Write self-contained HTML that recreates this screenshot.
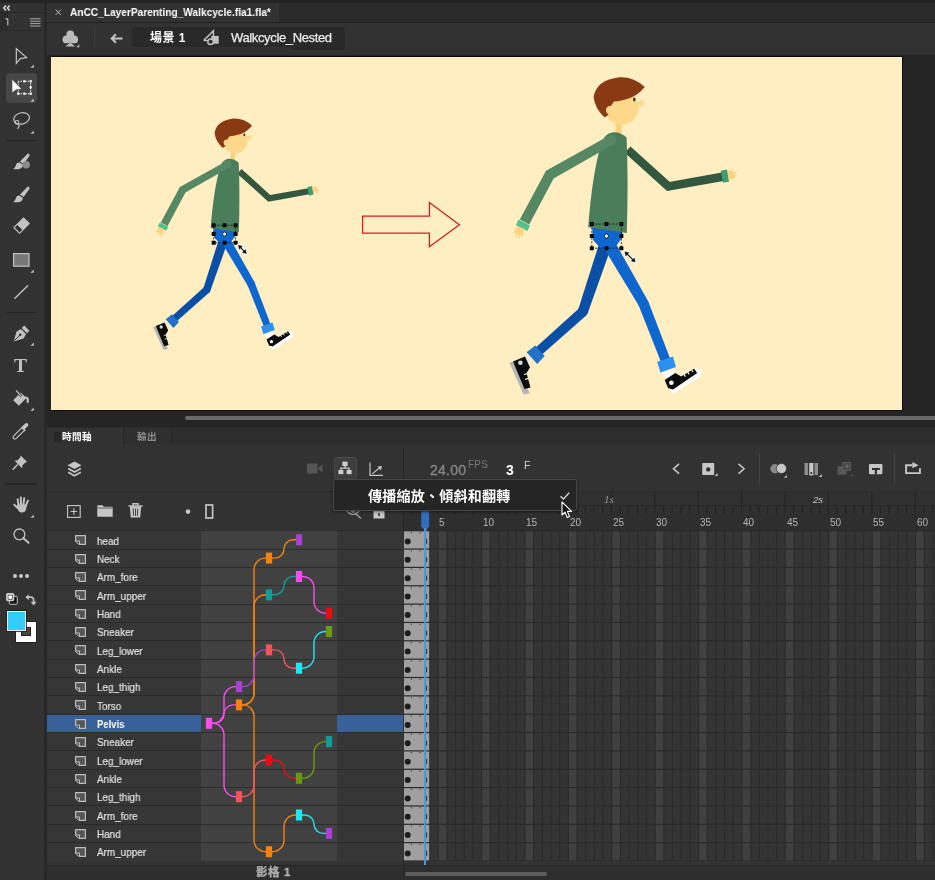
<!DOCTYPE html><html><head><meta charset="utf-8"><title>Animate</title><style>
*{box-sizing:border-box;margin:0;padding:0}
html,body{width:935px;height:880px;overflow:hidden;background:#282828}
body{position:relative;font-family:"Liberation Sans","Noto Sans CJK TC",sans-serif;color:#d4d4d4;font-size:11px}
.a{position:absolute}
.t{position:absolute;white-space:nowrap;line-height:1;will-change:transform}
svg{position:absolute;overflow:visible}
</style></head><body>
<div class="a" style="left:0px;top:0px;width:935px;height:3px;background:#232323;"></div>
<div class="a" style="left:0px;top:3px;width:44.2px;height:877px;background:#323232;"></div>
<div class="a" style="left:0px;top:12px;width:44.2px;height:1px;background:#262626;"></div>
<div class="a" style="left:0px;top:13px;width:8px;height:17px;background:#2b2b2b;"></div>
<div class="a" style="left:0px;top:30px;width:44.2px;height:1px;background:#2a2a2a;"></div>
<div class="a" style="left:47px;top:3px;width:888px;height:18.5px;background:#2a2a2a;"></div>
<div class="a" style="left:47px;top:3px;width:232px;height:18.5px;background:#323232;"></div>
<div class="a" style="left:47px;top:21.5px;width:888px;height:1px;background:#1f1f1f;"></div>
<div class="a" style="left:47px;top:22.5px;width:888px;height:32px;background:#323232;"></div>
<div class="a" style="left:47px;top:54.5px;width:888px;height:373.5px;background:#252525;"></div>
<div class="a" style="left:50.6px;top:56px;width:852.2px;height:354.8px;background:#0c0c0c;"></div>
<div class="a" style="left:51px;top:57px;width:851px;height:353px;background:#feeec2;"></div>
<div class="a" style="left:47px;top:427.4px;width:888px;height:453px;background:#2b2b2b;"></div>
<svg style="left:54.6px;top:9px" width="6.6" height="6.6" viewBox="0 0 8 8"><path d="M0.8 0.8L7.2 7.2M7.2 0.8L0.8 7.2" stroke="#c8c8c8" stroke-width="1.1" fill="none"/></svg>
<div class="t" style="left:70.3px;top:6.6px;font-size:11px;color:#ffffff;font-weight:bold;transform:scaleX(.922);transform-origin:0 0">AnCC_LayerParenting_Walkcycle.fla1.fla*</div>
<div class="a" style="left:132px;top:27px;width:213px;height:20px;background:#292929;border-radius:3px"></div>
<div class="a" style="left:291px;top:44px;width:54px;height:6px;background:#292929;border-radius:0 0 3px 3px"></div>
<div class="a" style="left:93.8px;top:27.5px;width:1px;height:19px;background:#3c3c3c;"></div>
<div class="t" style="left:150px;top:31.5px;font-size:12px;color:#ffffff;font-weight:bold;letter-spacing:0.5px">場景 1</div>
<div class="t" style="left:230.5px;top:31px;font-size:13px;color:#ececec;font-weight:normal;letter-spacing:-0.36px;-webkit-text-stroke:0.25px #ececec">Walkcycle_Nested</div>
<svg style="left:110px;top:33px" width="13" height="11" viewBox="0 0 13 11"><path d="M12.5 5.5H2.5M6 1.2L1.6 5.5L6 9.8" stroke="#c4c4c4" stroke-width="1.9" fill="none" stroke-linejoin="miter"/></svg>
<svg style="left:61px;top:29.2px" width="20" height="20" viewBox="0 0 20 20"><g fill="#bdbdbd"><circle cx="9.3" cy="5.4" r="3.9"/><circle cx="5.4" cy="10.4" r="3.9"/><circle cx="13.2" cy="10.4" r="3.9"/><path d="M9.3 8L10.4 14.4L14.2 17.4H4.4L8.2 14.4Z"/><path d="M18.3 15.2V18.2H15.3Z"/></g></svg>
<svg style="left:203px;top:30px" width="17" height="17" viewBox="0 0 17 17"><path d="M0.6 10.6L10.4 0.8V7" stroke="#c0c0c0" stroke-width="1.5" fill="none" stroke-linejoin="miter"/><path d="M1 10.6H6" stroke="#c0c0c0" stroke-width="1.2"/><rect x="8.2" y="5.9" width="7.5" height="7.8" fill="#c0c0c0"/><circle cx="7.6" cy="11.7" r="2.8" fill="#2e2e2e" stroke="#c0c0c0" stroke-width="1.5"/></svg>
<div class="a" style="left:185.2px;top:415.5px;width:760px;height:4.2px;background:#696969;border-radius:2.1px"></div>
<div class="a" style="left:47px;top:428px;width:888px;height:16px;background:#2d2d2d;"></div>
<div class="a" style="left:47px;top:428px;width:76px;height:16.2px;background:#323232;"></div>
<div class="a" style="left:123px;top:428px;width:48.5px;height:15.8px;background:#2f2f2f;border-left:1px solid #262626;border-right:1px solid #262626"></div>
<div class="a" style="left:54px;top:431.5px;width:7px;height:10px;background:#272727;"></div>
<div class="t" style="left:62px;top:431.8px;font-size:9.6px;color:#ffffff;font-weight:bold;letter-spacing:0.4px">時間軸</div>
<div class="t" style="left:136.5px;top:431.8px;font-size:9.6px;color:#8c8c8c;font-weight:bold;letter-spacing:0.4px">輸出</div>
<div class="a" style="left:47px;top:444px;width:888px;height:436px;background:#323232;"></div>
<div class="a" style="left:47px;top:491px;width:888px;height:1px;background:#282828;"></div>
<div class="a" style="left:403px;top:447px;width:1px;height:84px;background:#262626;"></div>
<div class="a" style="left:47px;top:530.7px;width:356px;height:330.3px;background:#363636;"></div>
<div class="a" style="left:201px;top:530.7px;width:135.8px;height:330.3px;background:#414141;"></div>
<div class="a" style="left:47px;top:714.2px;width:154px;height:18.35px;background:#38619a;"></div>
<div class="a" style="left:336.8px;top:714.2px;width:66.2px;height:18.35px;background:#38619a;"></div>
<div class="a" style="left:47px;top:530.2px;width:356px;height:1px;background:#2a2a2a;"></div>
<div class="a" style="left:47px;top:548.55px;width:356px;height:1px;background:#2a2a2a;"></div>
<div class="a" style="left:47px;top:566.9px;width:356px;height:1px;background:#2a2a2a;"></div>
<div class="a" style="left:47px;top:585.25px;width:356px;height:1px;background:#2a2a2a;"></div>
<div class="a" style="left:47px;top:603.6px;width:356px;height:1px;background:#2a2a2a;"></div>
<div class="a" style="left:47px;top:621.95px;width:356px;height:1px;background:#2a2a2a;"></div>
<div class="a" style="left:47px;top:640.3px;width:356px;height:1px;background:#2a2a2a;"></div>
<div class="a" style="left:47px;top:658.65px;width:356px;height:1px;background:#2a2a2a;"></div>
<div class="a" style="left:47px;top:677.0px;width:356px;height:1px;background:#2a2a2a;"></div>
<div class="a" style="left:47px;top:695.35px;width:356px;height:1px;background:#2a2a2a;"></div>
<div class="a" style="left:47px;top:713.7px;width:356px;height:1px;background:#2a2a2a;"></div>
<div class="a" style="left:47px;top:732.05px;width:356px;height:1px;background:#2a2a2a;"></div>
<div class="a" style="left:47px;top:750.4px;width:356px;height:1px;background:#2a2a2a;"></div>
<div class="a" style="left:47px;top:768.75px;width:356px;height:1px;background:#2a2a2a;"></div>
<div class="a" style="left:47px;top:787.1px;width:356px;height:1px;background:#2a2a2a;"></div>
<div class="a" style="left:47px;top:805.45px;width:356px;height:1px;background:#2a2a2a;"></div>
<div class="a" style="left:47px;top:823.8px;width:356px;height:1px;background:#2a2a2a;"></div>
<div class="a" style="left:47px;top:842.15px;width:356px;height:1px;background:#2a2a2a;"></div>
<div class="a" style="left:47px;top:860.5px;width:356px;height:1px;background:#2a2a2a;"></div>
<div class="a" style="left:201px;top:530.2px;width:135.8px;height:1px;background:#2d2d2d;"></div>
<div class="a" style="left:201px;top:548.55px;width:135.8px;height:1px;background:#2d2d2d;"></div>
<div class="a" style="left:201px;top:566.9px;width:135.8px;height:1px;background:#2d2d2d;"></div>
<div class="a" style="left:201px;top:585.25px;width:135.8px;height:1px;background:#2d2d2d;"></div>
<div class="a" style="left:201px;top:603.6px;width:135.8px;height:1px;background:#2d2d2d;"></div>
<div class="a" style="left:201px;top:621.95px;width:135.8px;height:1px;background:#2d2d2d;"></div>
<div class="a" style="left:201px;top:640.3px;width:135.8px;height:1px;background:#2d2d2d;"></div>
<div class="a" style="left:201px;top:658.65px;width:135.8px;height:1px;background:#2d2d2d;"></div>
<div class="a" style="left:201px;top:677.0px;width:135.8px;height:1px;background:#2d2d2d;"></div>
<div class="a" style="left:201px;top:695.35px;width:135.8px;height:1px;background:#2d2d2d;"></div>
<div class="a" style="left:201px;top:713.7px;width:135.8px;height:1px;background:#2d2d2d;"></div>
<div class="a" style="left:201px;top:732.05px;width:135.8px;height:1px;background:#2d2d2d;"></div>
<div class="a" style="left:201px;top:750.4px;width:135.8px;height:1px;background:#2d2d2d;"></div>
<div class="a" style="left:201px;top:768.75px;width:135.8px;height:1px;background:#2d2d2d;"></div>
<div class="a" style="left:201px;top:787.1px;width:135.8px;height:1px;background:#2d2d2d;"></div>
<div class="a" style="left:201px;top:805.45px;width:135.8px;height:1px;background:#2d2d2d;"></div>
<div class="a" style="left:201px;top:823.8px;width:135.8px;height:1px;background:#2d2d2d;"></div>
<div class="a" style="left:201px;top:842.15px;width:135.8px;height:1px;background:#2d2d2d;"></div>
<div class="a" style="left:201px;top:860.5px;width:135.8px;height:1px;background:#2d2d2d;"></div>
<svg style="left:75px;top:535.30px" width="11" height="10" viewBox="0 0 11 10"><path d="M0.6 0.6H10.4V9.4H4.2L0.6 6.2Z" fill="#555" stroke="#bdbdbd" stroke-width="1.2" stroke-linejoin="round"/><path d="M0.8 6H4.4V9.2" fill="#383838" stroke="#bdbdbd" stroke-width="1.1"/></svg>
<div class="t" style="left:97.4px;top:535.5px;font-size:11px;color:#e4e4e4;font-weight:normal;transform:scaleX(.9);transform-origin:0 0;-webkit-text-stroke:0.2px #e4e4e4">head</div>
<svg style="left:75px;top:553.65px" width="11" height="10" viewBox="0 0 11 10"><path d="M0.6 0.6H10.4V9.4H4.2L0.6 6.2Z" fill="#555" stroke="#bdbdbd" stroke-width="1.2" stroke-linejoin="round"/><path d="M0.8 6H4.4V9.2" fill="#383838" stroke="#bdbdbd" stroke-width="1.1"/></svg>
<div class="t" style="left:97.4px;top:553.85px;font-size:11px;color:#e4e4e4;font-weight:normal;transform:scaleX(.9);transform-origin:0 0;-webkit-text-stroke:0.2px #e4e4e4">Neck</div>
<svg style="left:75px;top:572.00px" width="11" height="10" viewBox="0 0 11 10"><path d="M0.6 0.6H10.4V9.4H4.2L0.6 6.2Z" fill="#555" stroke="#bdbdbd" stroke-width="1.2" stroke-linejoin="round"/><path d="M0.8 6H4.4V9.2" fill="#383838" stroke="#bdbdbd" stroke-width="1.1"/></svg>
<div class="t" style="left:97.4px;top:572.2px;font-size:11px;color:#e4e4e4;font-weight:normal;transform:scaleX(.9);transform-origin:0 0;-webkit-text-stroke:0.2px #e4e4e4">Arm_fore</div>
<svg style="left:75px;top:590.35px" width="11" height="10" viewBox="0 0 11 10"><path d="M0.6 0.6H10.4V9.4H4.2L0.6 6.2Z" fill="#555" stroke="#bdbdbd" stroke-width="1.2" stroke-linejoin="round"/><path d="M0.8 6H4.4V9.2" fill="#383838" stroke="#bdbdbd" stroke-width="1.1"/></svg>
<div class="t" style="left:97.4px;top:590.55px;font-size:11px;color:#e4e4e4;font-weight:normal;transform:scaleX(.9);transform-origin:0 0;-webkit-text-stroke:0.2px #e4e4e4">Arm_upper</div>
<svg style="left:75px;top:608.70px" width="11" height="10" viewBox="0 0 11 10"><path d="M0.6 0.6H10.4V9.4H4.2L0.6 6.2Z" fill="#555" stroke="#bdbdbd" stroke-width="1.2" stroke-linejoin="round"/><path d="M0.8 6H4.4V9.2" fill="#383838" stroke="#bdbdbd" stroke-width="1.1"/></svg>
<div class="t" style="left:97.4px;top:608.9px;font-size:11px;color:#e4e4e4;font-weight:normal;transform:scaleX(.9);transform-origin:0 0;-webkit-text-stroke:0.2px #e4e4e4">Hand</div>
<svg style="left:75px;top:627.05px" width="11" height="10" viewBox="0 0 11 10"><path d="M0.6 0.6H10.4V9.4H4.2L0.6 6.2Z" fill="#555" stroke="#bdbdbd" stroke-width="1.2" stroke-linejoin="round"/><path d="M0.8 6H4.4V9.2" fill="#383838" stroke="#bdbdbd" stroke-width="1.1"/></svg>
<div class="t" style="left:97.4px;top:627.25px;font-size:11px;color:#e4e4e4;font-weight:normal;transform:scaleX(.9);transform-origin:0 0;-webkit-text-stroke:0.2px #e4e4e4">Sneaker</div>
<svg style="left:75px;top:645.40px" width="11" height="10" viewBox="0 0 11 10"><path d="M0.6 0.6H10.4V9.4H4.2L0.6 6.2Z" fill="#555" stroke="#bdbdbd" stroke-width="1.2" stroke-linejoin="round"/><path d="M0.8 6H4.4V9.2" fill="#383838" stroke="#bdbdbd" stroke-width="1.1"/></svg>
<div class="t" style="left:97.4px;top:645.6px;font-size:11px;color:#e4e4e4;font-weight:normal;transform:scaleX(.9);transform-origin:0 0;-webkit-text-stroke:0.2px #e4e4e4">Leg_lower</div>
<svg style="left:75px;top:663.75px" width="11" height="10" viewBox="0 0 11 10"><path d="M0.6 0.6H10.4V9.4H4.2L0.6 6.2Z" fill="#555" stroke="#bdbdbd" stroke-width="1.2" stroke-linejoin="round"/><path d="M0.8 6H4.4V9.2" fill="#383838" stroke="#bdbdbd" stroke-width="1.1"/></svg>
<div class="t" style="left:97.4px;top:663.95px;font-size:11px;color:#e4e4e4;font-weight:normal;transform:scaleX(.9);transform-origin:0 0;-webkit-text-stroke:0.2px #e4e4e4">Ankle</div>
<svg style="left:75px;top:682.10px" width="11" height="10" viewBox="0 0 11 10"><path d="M0.6 0.6H10.4V9.4H4.2L0.6 6.2Z" fill="#555" stroke="#bdbdbd" stroke-width="1.2" stroke-linejoin="round"/><path d="M0.8 6H4.4V9.2" fill="#383838" stroke="#bdbdbd" stroke-width="1.1"/></svg>
<div class="t" style="left:97.4px;top:682.3px;font-size:11px;color:#e4e4e4;font-weight:normal;transform:scaleX(.9);transform-origin:0 0;-webkit-text-stroke:0.2px #e4e4e4">Leg_thigh</div>
<svg style="left:75px;top:700.45px" width="11" height="10" viewBox="0 0 11 10"><path d="M0.6 0.6H10.4V9.4H4.2L0.6 6.2Z" fill="#555" stroke="#bdbdbd" stroke-width="1.2" stroke-linejoin="round"/><path d="M0.8 6H4.4V9.2" fill="#383838" stroke="#bdbdbd" stroke-width="1.1"/></svg>
<div class="t" style="left:97.4px;top:700.65px;font-size:11px;color:#e4e4e4;font-weight:normal;transform:scaleX(.9);transform-origin:0 0;-webkit-text-stroke:0.2px #e4e4e4">Torso</div>
<svg style="left:75px;top:718.80px" width="11" height="10" viewBox="0 0 11 10"><path d="M0.6 0.6H10.4V9.4H4.2L0.6 6.2Z" fill="#555" stroke="#bdbdbd" stroke-width="1.2" stroke-linejoin="round"/><path d="M0.8 6H4.4V9.2" fill="#383838" stroke="#bdbdbd" stroke-width="1.1"/></svg>
<div class="t" style="left:97px;top:719.0px;font-size:11px;color:#ffffff;font-weight:bold;transform:scaleX(.86);transform-origin:0 0">Pelvis</div>
<svg style="left:75px;top:737.15px" width="11" height="10" viewBox="0 0 11 10"><path d="M0.6 0.6H10.4V9.4H4.2L0.6 6.2Z" fill="#555" stroke="#bdbdbd" stroke-width="1.2" stroke-linejoin="round"/><path d="M0.8 6H4.4V9.2" fill="#383838" stroke="#bdbdbd" stroke-width="1.1"/></svg>
<div class="t" style="left:97.4px;top:737.35px;font-size:11px;color:#e4e4e4;font-weight:normal;transform:scaleX(.9);transform-origin:0 0;-webkit-text-stroke:0.2px #e4e4e4">Sneaker</div>
<svg style="left:75px;top:755.50px" width="11" height="10" viewBox="0 0 11 10"><path d="M0.6 0.6H10.4V9.4H4.2L0.6 6.2Z" fill="#555" stroke="#bdbdbd" stroke-width="1.2" stroke-linejoin="round"/><path d="M0.8 6H4.4V9.2" fill="#383838" stroke="#bdbdbd" stroke-width="1.1"/></svg>
<div class="t" style="left:97.4px;top:755.7px;font-size:11px;color:#e4e4e4;font-weight:normal;transform:scaleX(.9);transform-origin:0 0;-webkit-text-stroke:0.2px #e4e4e4">Leg_lower</div>
<svg style="left:75px;top:773.85px" width="11" height="10" viewBox="0 0 11 10"><path d="M0.6 0.6H10.4V9.4H4.2L0.6 6.2Z" fill="#555" stroke="#bdbdbd" stroke-width="1.2" stroke-linejoin="round"/><path d="M0.8 6H4.4V9.2" fill="#383838" stroke="#bdbdbd" stroke-width="1.1"/></svg>
<div class="t" style="left:97.4px;top:774.05px;font-size:11px;color:#e4e4e4;font-weight:normal;transform:scaleX(.9);transform-origin:0 0;-webkit-text-stroke:0.2px #e4e4e4">Ankle</div>
<svg style="left:75px;top:792.20px" width="11" height="10" viewBox="0 0 11 10"><path d="M0.6 0.6H10.4V9.4H4.2L0.6 6.2Z" fill="#555" stroke="#bdbdbd" stroke-width="1.2" stroke-linejoin="round"/><path d="M0.8 6H4.4V9.2" fill="#383838" stroke="#bdbdbd" stroke-width="1.1"/></svg>
<div class="t" style="left:97.4px;top:792.4px;font-size:11px;color:#e4e4e4;font-weight:normal;transform:scaleX(.9);transform-origin:0 0;-webkit-text-stroke:0.2px #e4e4e4">Leg_thigh</div>
<svg style="left:75px;top:810.55px" width="11" height="10" viewBox="0 0 11 10"><path d="M0.6 0.6H10.4V9.4H4.2L0.6 6.2Z" fill="#555" stroke="#bdbdbd" stroke-width="1.2" stroke-linejoin="round"/><path d="M0.8 6H4.4V9.2" fill="#383838" stroke="#bdbdbd" stroke-width="1.1"/></svg>
<div class="t" style="left:97.4px;top:810.75px;font-size:11px;color:#e4e4e4;font-weight:normal;transform:scaleX(.9);transform-origin:0 0;-webkit-text-stroke:0.2px #e4e4e4">Arm_fore</div>
<svg style="left:75px;top:828.90px" width="11" height="10" viewBox="0 0 11 10"><path d="M0.6 0.6H10.4V9.4H4.2L0.6 6.2Z" fill="#555" stroke="#bdbdbd" stroke-width="1.2" stroke-linejoin="round"/><path d="M0.8 6H4.4V9.2" fill="#383838" stroke="#bdbdbd" stroke-width="1.1"/></svg>
<div class="t" style="left:97.4px;top:829.1px;font-size:11px;color:#e4e4e4;font-weight:normal;transform:scaleX(.9);transform-origin:0 0;-webkit-text-stroke:0.2px #e4e4e4">Hand</div>
<svg style="left:75px;top:847.25px" width="11" height="10" viewBox="0 0 11 10"><path d="M0.6 0.6H10.4V9.4H4.2L0.6 6.2Z" fill="#555" stroke="#bdbdbd" stroke-width="1.2" stroke-linejoin="round"/><path d="M0.8 6H4.4V9.2" fill="#383838" stroke="#bdbdbd" stroke-width="1.1"/></svg>
<div class="t" style="left:97.4px;top:847.45px;font-size:11px;color:#e4e4e4;font-weight:normal;transform:scaleX(.9);transform-origin:0 0;-webkit-text-stroke:0.2px #e4e4e4">Arm_upper</div>
<svg style="left:0;top:0" width="935" height="880" viewBox="0 0 935 880"><path d="M212.0 723.3H212.6C218.9 723.3 224.0 718.1 224.0 711.9V698.0C224.0 691.7 229.1 686.6 235.4 686.6H236.0" fill="none" stroke="#f84df0" stroke-width="1.4"/><path d="M212.0 723.3H214.8C219.9 723.3 224.0 719.1 224.0 714.1V714.1C224.0 709.1 228.1 704.9 233.2 704.9H236.0" fill="none" stroke="#f84df0" stroke-width="1.4"/><path d="M212.0 723.3H212.6C218.9 723.3 224.0 728.4 224.0 734.7V785.3C224.0 791.5 229.1 796.7 235.4 796.7H236.0" fill="none" stroke="#f84df0" stroke-width="1.4"/><path d="M242.0 704.9H242.6C248.9 704.9 254.0 699.8 254.0 693.5V569.5C254.0 563.3 259.1 558.1 265.4 558.1H266.0" fill="none" stroke="#f5820f" stroke-width="1.4"/><path d="M242.0 704.9H242.6C248.9 704.9 254.0 699.8 254.0 693.5V606.2C254.0 600.0 259.1 594.8 265.4 594.8H266.0" fill="none" stroke="#f5820f" stroke-width="1.4"/><path d="M242.0 704.9H242.6C248.9 704.9 254.0 710.1 254.0 716.3V840.3C254.0 846.6 259.1 851.7 265.4 851.7H266.0" fill="none" stroke="#f5820f" stroke-width="1.4"/><path d="M272.0 558.1H274.8C279.9 558.1 284.0 554.0 284.0 549.0V549.0C284.0 543.9 288.1 539.8 293.2 539.8H296.0" fill="none" stroke="#f5820f" stroke-width="1.4"/><path d="M272.0 594.8H274.8C279.9 594.8 284.0 590.7 284.0 585.6V585.6C284.0 580.6 288.1 576.5 293.2 576.5H296.0" fill="none" stroke="#0f9e97" stroke-width="1.4"/><path d="M302.0 576.5H302.6C308.9 576.5 314.0 581.6 314.0 587.9V601.8C314.0 608.0 319.1 613.2 325.4 613.2H326.0" fill="none" stroke="#f84df0" stroke-width="1.4"/><path d="M242.0 686.6H242.6C248.9 686.6 254.0 681.4 254.0 675.2V661.3C254.0 655.0 259.1 649.9 265.4 649.9H266.0" fill="none" stroke="#a840d6" stroke-width="1.4"/><path d="M272.0 649.9H274.8C279.9 649.9 284.0 654.0 284.0 659.0V659.0C284.0 664.1 288.1 668.2 293.2 668.2H296.0" fill="none" stroke="#f4535a" stroke-width="1.4"/><path d="M302.0 668.2H302.6C308.9 668.2 314.0 663.1 314.0 656.8V642.9C314.0 636.7 319.1 631.5 325.4 631.5H326.0" fill="none" stroke="#1ee7f5" stroke-width="1.4"/><path d="M242.0 796.7H242.6C248.9 796.7 254.0 791.5 254.0 785.3V771.4C254.0 765.1 259.1 760.0 265.4 760.0H266.0" fill="none" stroke="#f4535a" stroke-width="1.4"/><path d="M272.0 760.0H274.8C279.9 760.0 284.0 764.1 284.0 769.1V769.1C284.0 774.2 288.1 778.3 293.2 778.3H296.0" fill="none" stroke="#ee0a12" stroke-width="1.4"/><path d="M302.0 778.3H302.6C308.9 778.3 314.0 773.2 314.0 766.9V753.0C314.0 746.8 319.1 741.6 325.4 741.6H326.0" fill="none" stroke="#6b9a10" stroke-width="1.4"/><path d="M272.0 851.7H272.6C278.9 851.7 284.0 846.6 284.0 840.3V826.4C284.0 820.2 289.1 815.0 295.4 815.0H296.0" fill="none" stroke="#f5820f" stroke-width="1.4"/><path d="M302.0 815.0H304.8C309.9 815.0 314.0 819.2 314.0 824.2V824.2C314.0 829.2 318.1 833.4 323.2 833.4H326.0" fill="none" stroke="#1ee7f5" stroke-width="1.4"/><rect x="295.9" y="534.3" width="6.2" height="11" fill="#a840d6"/><rect x="265.9" y="552.6" width="6.2" height="11" fill="#f5820f"/><rect x="295.9" y="571.0" width="6.2" height="11" fill="#f84df0"/><rect x="265.9" y="589.3" width="6.2" height="11" fill="#0f9e97"/><rect x="325.9" y="607.7" width="6.2" height="11" fill="#ee0a12"/><rect x="325.9" y="626.0" width="6.2" height="11" fill="#6b9a10"/><rect x="265.9" y="644.4" width="6.2" height="11" fill="#f4535a"/><rect x="295.9" y="662.7" width="6.2" height="11" fill="#1ee7f5"/><rect x="235.9" y="681.1" width="6.2" height="11" fill="#a840d6"/><rect x="235.9" y="699.4" width="6.2" height="11" fill="#f5820f"/><rect x="205.9" y="717.8" width="6.2" height="11" fill="#f84df0"/><rect x="325.9" y="736.1" width="6.2" height="11" fill="#0f9e97"/><rect x="265.9" y="754.5" width="6.2" height="11" fill="#ee0a12"/><rect x="295.9" y="772.8" width="6.2" height="11" fill="#6b9a10"/><rect x="235.9" y="791.2" width="6.2" height="11" fill="#f4535a"/><rect x="295.9" y="809.5" width="6.2" height="11" fill="#1ee7f5"/><rect x="325.9" y="827.9" width="6.2" height="11" fill="#a840d6"/><rect x="265.9" y="846.2" width="6.2" height="11" fill="#f5820f"/></svg>
<svg style="left:0;top:0" width="935" height="880" viewBox="0 0 935 880" shape-rendering="auto"><rect x="404" y="491.5" width="531" height="23" fill="#303030"/><rect x="404" y="514" width="531" height="16.7" fill="#2e2e2e"/><rect x="404" y="505.3" width="531" height="1" fill="#292929"/><rect x="404" y="510.3" width="531" height="0.8" fill="#3a3a3a" opacity="0"/><rect x="437.22" y="492" width="1.1" height="14.5" fill="#242424"/><rect x="480.62" y="492" width="1.1" height="14.5" fill="#242424"/><rect x="524.02" y="492" width="1.1" height="14.5" fill="#242424"/><rect x="567.42" y="492" width="1.1" height="14.5" fill="#242424"/><rect x="610.82" y="492" width="1.1" height="14.5" fill="#242424"/><rect x="654.22" y="492" width="1.1" height="14.5" fill="#242424"/><rect x="697.62" y="492" width="1.1" height="14.5" fill="#242424"/><rect x="741.02" y="492" width="1.1" height="14.5" fill="#242424"/><rect x="784.42" y="492" width="1.1" height="14.5" fill="#242424"/><rect x="827.82" y="492" width="1.1" height="14.5" fill="#242424"/><rect x="871.22" y="492" width="1.1" height="14.5" fill="#242424"/><rect x="914.62" y="492" width="1.1" height="14.5" fill="#242424"/><rect x="958.02" y="492" width="1.1" height="14.5" fill="#242424"/><rect x="402.50" y="506.4" width="1.1" height="7" fill="#222222"/><rect x="411.18" y="506.4" width="1.1" height="7" fill="#222222"/><rect x="419.86" y="506.4" width="1.1" height="7" fill="#222222"/><rect x="428.54" y="506.4" width="1.1" height="7" fill="#222222"/><rect x="437.22" y="506.4" width="1.1" height="7" fill="#222222"/><rect x="445.90" y="506.4" width="1.1" height="7" fill="#222222"/><rect x="454.58" y="506.4" width="1.1" height="7" fill="#222222"/><rect x="463.26" y="506.4" width="1.1" height="7" fill="#222222"/><rect x="471.94" y="506.4" width="1.1" height="7" fill="#222222"/><rect x="480.62" y="506.4" width="1.1" height="7" fill="#222222"/><rect x="489.30" y="506.4" width="1.1" height="7" fill="#222222"/><rect x="497.98" y="506.4" width="1.1" height="7" fill="#222222"/><rect x="506.66" y="506.4" width="1.1" height="7" fill="#222222"/><rect x="515.34" y="506.4" width="1.1" height="7" fill="#222222"/><rect x="524.02" y="506.4" width="1.1" height="7" fill="#222222"/><rect x="532.70" y="506.4" width="1.1" height="7" fill="#222222"/><rect x="541.38" y="506.4" width="1.1" height="7" fill="#222222"/><rect x="550.06" y="506.4" width="1.1" height="7" fill="#222222"/><rect x="558.74" y="506.4" width="1.1" height="7" fill="#222222"/><rect x="567.42" y="506.4" width="1.1" height="7" fill="#222222"/><rect x="576.10" y="506.4" width="1.1" height="7" fill="#222222"/><rect x="584.78" y="506.4" width="1.1" height="7" fill="#222222"/><rect x="593.46" y="506.4" width="1.1" height="7" fill="#222222"/><rect x="602.14" y="506.4" width="1.1" height="7" fill="#222222"/><rect x="610.82" y="506.4" width="1.1" height="7" fill="#222222"/><rect x="619.50" y="506.4" width="1.1" height="7" fill="#222222"/><rect x="628.18" y="506.4" width="1.1" height="7" fill="#222222"/><rect x="636.86" y="506.4" width="1.1" height="7" fill="#222222"/><rect x="645.54" y="506.4" width="1.1" height="7" fill="#222222"/><rect x="654.22" y="506.4" width="1.1" height="7" fill="#222222"/><rect x="662.90" y="506.4" width="1.1" height="7" fill="#222222"/><rect x="671.58" y="506.4" width="1.1" height="7" fill="#222222"/><rect x="680.26" y="506.4" width="1.1" height="7" fill="#222222"/><rect x="688.94" y="506.4" width="1.1" height="7" fill="#222222"/><rect x="697.62" y="506.4" width="1.1" height="7" fill="#222222"/><rect x="706.30" y="506.4" width="1.1" height="7" fill="#222222"/><rect x="714.98" y="506.4" width="1.1" height="7" fill="#222222"/><rect x="723.66" y="506.4" width="1.1" height="7" fill="#222222"/><rect x="732.34" y="506.4" width="1.1" height="7" fill="#222222"/><rect x="741.02" y="506.4" width="1.1" height="7" fill="#222222"/><rect x="749.70" y="506.4" width="1.1" height="7" fill="#222222"/><rect x="758.38" y="506.4" width="1.1" height="7" fill="#222222"/><rect x="767.06" y="506.4" width="1.1" height="7" fill="#222222"/><rect x="775.74" y="506.4" width="1.1" height="7" fill="#222222"/><rect x="784.42" y="506.4" width="1.1" height="7" fill="#222222"/><rect x="793.10" y="506.4" width="1.1" height="7" fill="#222222"/><rect x="801.78" y="506.4" width="1.1" height="7" fill="#222222"/><rect x="810.46" y="506.4" width="1.1" height="7" fill="#222222"/><rect x="819.14" y="506.4" width="1.1" height="7" fill="#222222"/><rect x="827.82" y="506.4" width="1.1" height="7" fill="#222222"/><rect x="836.50" y="506.4" width="1.1" height="7" fill="#222222"/><rect x="845.18" y="506.4" width="1.1" height="7" fill="#222222"/><rect x="853.86" y="506.4" width="1.1" height="7" fill="#222222"/><rect x="862.54" y="506.4" width="1.1" height="7" fill="#222222"/><rect x="871.22" y="506.4" width="1.1" height="7" fill="#222222"/><rect x="879.90" y="506.4" width="1.1" height="7" fill="#222222"/><rect x="888.58" y="506.4" width="1.1" height="7" fill="#222222"/><rect x="897.26" y="506.4" width="1.1" height="7" fill="#222222"/><rect x="905.94" y="506.4" width="1.1" height="7" fill="#222222"/><rect x="914.62" y="506.4" width="1.1" height="7" fill="#222222"/><rect x="923.30" y="506.4" width="1.1" height="7" fill="#222222"/><rect x="931.98" y="506.4" width="1.1" height="7" fill="#222222"/><rect x="404" y="530.7" width="531" height="330.30" fill="#2b2b2b"/><rect x="404.00" y="530.7" width="7.58" height="330.30" fill="#343434"/><rect x="412.68" y="530.7" width="7.58" height="330.30" fill="#343434"/><rect x="421.36" y="530.7" width="7.58" height="330.30" fill="#343434"/><rect x="430.04" y="530.7" width="7.58" height="330.30" fill="#343434"/><rect x="438.72" y="530.7" width="7.58" height="330.30" fill="#404040"/><rect x="447.40" y="530.7" width="7.58" height="330.30" fill="#343434"/><rect x="456.08" y="530.7" width="7.58" height="330.30" fill="#343434"/><rect x="464.76" y="530.7" width="7.58" height="330.30" fill="#343434"/><rect x="473.44" y="530.7" width="7.58" height="330.30" fill="#343434"/><rect x="482.12" y="530.7" width="7.58" height="330.30" fill="#404040"/><rect x="490.80" y="530.7" width="7.58" height="330.30" fill="#343434"/><rect x="499.48" y="530.7" width="7.58" height="330.30" fill="#343434"/><rect x="508.16" y="530.7" width="7.58" height="330.30" fill="#343434"/><rect x="516.84" y="530.7" width="7.58" height="330.30" fill="#343434"/><rect x="525.52" y="530.7" width="7.58" height="330.30" fill="#404040"/><rect x="534.20" y="530.7" width="7.58" height="330.30" fill="#343434"/><rect x="542.88" y="530.7" width="7.58" height="330.30" fill="#343434"/><rect x="551.56" y="530.7" width="7.58" height="330.30" fill="#343434"/><rect x="560.24" y="530.7" width="7.58" height="330.30" fill="#343434"/><rect x="568.92" y="530.7" width="7.58" height="330.30" fill="#404040"/><rect x="577.60" y="530.7" width="7.58" height="330.30" fill="#343434"/><rect x="586.28" y="530.7" width="7.58" height="330.30" fill="#343434"/><rect x="594.96" y="530.7" width="7.58" height="330.30" fill="#343434"/><rect x="603.64" y="530.7" width="7.58" height="330.30" fill="#343434"/><rect x="612.32" y="530.7" width="7.58" height="330.30" fill="#404040"/><rect x="621.00" y="530.7" width="7.58" height="330.30" fill="#343434"/><rect x="629.68" y="530.7" width="7.58" height="330.30" fill="#343434"/><rect x="638.36" y="530.7" width="7.58" height="330.30" fill="#343434"/><rect x="647.04" y="530.7" width="7.58" height="330.30" fill="#343434"/><rect x="655.72" y="530.7" width="7.58" height="330.30" fill="#404040"/><rect x="664.40" y="530.7" width="7.58" height="330.30" fill="#343434"/><rect x="673.08" y="530.7" width="7.58" height="330.30" fill="#343434"/><rect x="681.76" y="530.7" width="7.58" height="330.30" fill="#343434"/><rect x="690.44" y="530.7" width="7.58" height="330.30" fill="#343434"/><rect x="699.12" y="530.7" width="7.58" height="330.30" fill="#404040"/><rect x="707.80" y="530.7" width="7.58" height="330.30" fill="#343434"/><rect x="716.48" y="530.7" width="7.58" height="330.30" fill="#343434"/><rect x="725.16" y="530.7" width="7.58" height="330.30" fill="#343434"/><rect x="733.84" y="530.7" width="7.58" height="330.30" fill="#343434"/><rect x="742.52" y="530.7" width="7.58" height="330.30" fill="#404040"/><rect x="751.20" y="530.7" width="7.58" height="330.30" fill="#343434"/><rect x="759.88" y="530.7" width="7.58" height="330.30" fill="#343434"/><rect x="768.56" y="530.7" width="7.58" height="330.30" fill="#343434"/><rect x="777.24" y="530.7" width="7.58" height="330.30" fill="#343434"/><rect x="785.92" y="530.7" width="7.58" height="330.30" fill="#404040"/><rect x="794.60" y="530.7" width="7.58" height="330.30" fill="#343434"/><rect x="803.28" y="530.7" width="7.58" height="330.30" fill="#343434"/><rect x="811.96" y="530.7" width="7.58" height="330.30" fill="#343434"/><rect x="820.64" y="530.7" width="7.58" height="330.30" fill="#343434"/><rect x="829.32" y="530.7" width="7.58" height="330.30" fill="#404040"/><rect x="838.00" y="530.7" width="7.58" height="330.30" fill="#343434"/><rect x="846.68" y="530.7" width="7.58" height="330.30" fill="#343434"/><rect x="855.36" y="530.7" width="7.58" height="330.30" fill="#343434"/><rect x="864.04" y="530.7" width="7.58" height="330.30" fill="#343434"/><rect x="872.72" y="530.7" width="7.58" height="330.30" fill="#404040"/><rect x="881.40" y="530.7" width="7.58" height="330.30" fill="#343434"/><rect x="890.08" y="530.7" width="7.58" height="330.30" fill="#343434"/><rect x="898.76" y="530.7" width="7.58" height="330.30" fill="#343434"/><rect x="907.44" y="530.7" width="7.58" height="330.30" fill="#343434"/><rect x="916.12" y="530.7" width="7.58" height="330.30" fill="#404040"/><rect x="924.80" y="530.7" width="7.58" height="330.30" fill="#343434"/><rect x="933.48" y="530.7" width="7.58" height="330.30" fill="#343434"/><rect x="404" y="530.7" width="25.2" height="330.30" fill="#a0a0a0"/><rect x="404" y="530.10" width="531" height="1.2" fill="#2a2a2a"/><rect x="404" y="548.45" width="531" height="1.2" fill="#2a2a2a"/><rect x="404" y="566.80" width="531" height="1.2" fill="#2a2a2a"/><rect x="404" y="585.15" width="531" height="1.2" fill="#2a2a2a"/><rect x="404" y="603.50" width="531" height="1.2" fill="#2a2a2a"/><rect x="404" y="621.85" width="531" height="1.2" fill="#2a2a2a"/><rect x="404" y="640.20" width="531" height="1.2" fill="#2a2a2a"/><rect x="404" y="658.55" width="531" height="1.2" fill="#2a2a2a"/><rect x="404" y="676.90" width="531" height="1.2" fill="#2a2a2a"/><rect x="404" y="695.25" width="531" height="1.2" fill="#2a2a2a"/><rect x="404" y="713.60" width="531" height="1.2" fill="#2a2a2a"/><rect x="404" y="731.95" width="531" height="1.2" fill="#2a2a2a"/><rect x="404" y="750.30" width="531" height="1.2" fill="#2a2a2a"/><rect x="404" y="768.65" width="531" height="1.2" fill="#2a2a2a"/><rect x="404" y="787.00" width="531" height="1.2" fill="#2a2a2a"/><rect x="404" y="805.35" width="531" height="1.2" fill="#2a2a2a"/><rect x="404" y="823.70" width="531" height="1.2" fill="#2a2a2a"/><rect x="404" y="842.05" width="531" height="1.2" fill="#2a2a2a"/><rect x="404" y="860.40" width="531" height="1.2" fill="#2a2a2a"/><circle cx="407.7" cy="541.48" r="3" fill="#1c1c1c"/><rect x="410.9" y="531.90" width="1" height="1.2" fill="#333"/><rect x="419.6" y="531.90" width="1" height="1.2" fill="#333"/><rect x="425.3" y="538.88" width="1.8" height="5" fill="#1c1c1c"/><circle cx="407.7" cy="559.83" r="3" fill="#1c1c1c"/><rect x="410.9" y="550.25" width="1" height="1.2" fill="#333"/><rect x="419.6" y="550.25" width="1" height="1.2" fill="#333"/><rect x="425.3" y="557.23" width="1.8" height="5" fill="#1c1c1c"/><circle cx="407.7" cy="578.18" r="3" fill="#1c1c1c"/><rect x="410.9" y="568.60" width="1" height="1.2" fill="#333"/><rect x="419.6" y="568.60" width="1" height="1.2" fill="#333"/><rect x="425.3" y="575.58" width="1.8" height="5" fill="#1c1c1c"/><circle cx="407.7" cy="596.52" r="3" fill="#1c1c1c"/><rect x="410.9" y="586.95" width="1" height="1.2" fill="#333"/><rect x="419.6" y="586.95" width="1" height="1.2" fill="#333"/><rect x="425.3" y="593.92" width="1.8" height="5" fill="#1c1c1c"/><circle cx="407.7" cy="614.88" r="3" fill="#1c1c1c"/><rect x="410.9" y="605.30" width="1" height="1.2" fill="#333"/><rect x="419.6" y="605.30" width="1" height="1.2" fill="#333"/><rect x="425.3" y="612.27" width="1.8" height="5" fill="#1c1c1c"/><circle cx="407.7" cy="633.23" r="3" fill="#1c1c1c"/><rect x="410.9" y="623.65" width="1" height="1.2" fill="#333"/><rect x="419.6" y="623.65" width="1" height="1.2" fill="#333"/><rect x="425.3" y="630.62" width="1.8" height="5" fill="#1c1c1c"/><circle cx="407.7" cy="651.58" r="3" fill="#1c1c1c"/><rect x="410.9" y="642.00" width="1" height="1.2" fill="#333"/><rect x="419.6" y="642.00" width="1" height="1.2" fill="#333"/><rect x="425.3" y="648.98" width="1.8" height="5" fill="#1c1c1c"/><circle cx="407.7" cy="669.93" r="3" fill="#1c1c1c"/><rect x="410.9" y="660.35" width="1" height="1.2" fill="#333"/><rect x="419.6" y="660.35" width="1" height="1.2" fill="#333"/><rect x="425.3" y="667.33" width="1.8" height="5" fill="#1c1c1c"/><circle cx="407.7" cy="688.27" r="3" fill="#1c1c1c"/><rect x="410.9" y="678.70" width="1" height="1.2" fill="#333"/><rect x="419.6" y="678.70" width="1" height="1.2" fill="#333"/><rect x="425.3" y="685.67" width="1.8" height="5" fill="#1c1c1c"/><circle cx="407.7" cy="706.62" r="3" fill="#1c1c1c"/><rect x="410.9" y="697.05" width="1" height="1.2" fill="#333"/><rect x="419.6" y="697.05" width="1" height="1.2" fill="#333"/><rect x="425.3" y="704.02" width="1.8" height="5" fill="#1c1c1c"/><circle cx="407.7" cy="724.98" r="3" fill="#1c1c1c"/><rect x="410.9" y="715.40" width="1" height="1.2" fill="#333"/><rect x="419.6" y="715.40" width="1" height="1.2" fill="#333"/><rect x="425.3" y="722.38" width="1.8" height="5" fill="#1c1c1c"/><circle cx="407.7" cy="743.33" r="3" fill="#1c1c1c"/><rect x="410.9" y="733.75" width="1" height="1.2" fill="#333"/><rect x="419.6" y="733.75" width="1" height="1.2" fill="#333"/><rect x="425.3" y="740.73" width="1.8" height="5" fill="#1c1c1c"/><circle cx="407.7" cy="761.68" r="3" fill="#1c1c1c"/><rect x="410.9" y="752.10" width="1" height="1.2" fill="#333"/><rect x="419.6" y="752.10" width="1" height="1.2" fill="#333"/><rect x="425.3" y="759.08" width="1.8" height="5" fill="#1c1c1c"/><circle cx="407.7" cy="780.02" r="3" fill="#1c1c1c"/><rect x="410.9" y="770.45" width="1" height="1.2" fill="#333"/><rect x="419.6" y="770.45" width="1" height="1.2" fill="#333"/><rect x="425.3" y="777.42" width="1.8" height="5" fill="#1c1c1c"/><circle cx="407.7" cy="798.38" r="3" fill="#1c1c1c"/><rect x="410.9" y="788.80" width="1" height="1.2" fill="#333"/><rect x="419.6" y="788.80" width="1" height="1.2" fill="#333"/><rect x="425.3" y="795.78" width="1.8" height="5" fill="#1c1c1c"/><circle cx="407.7" cy="816.73" r="3" fill="#1c1c1c"/><rect x="410.9" y="807.15" width="1" height="1.2" fill="#333"/><rect x="419.6" y="807.15" width="1" height="1.2" fill="#333"/><rect x="425.3" y="814.12" width="1.8" height="5" fill="#1c1c1c"/><circle cx="407.7" cy="835.08" r="3" fill="#1c1c1c"/><rect x="410.9" y="825.50" width="1" height="1.2" fill="#333"/><rect x="419.6" y="825.50" width="1" height="1.2" fill="#333"/><rect x="425.3" y="832.48" width="1.8" height="5" fill="#1c1c1c"/><circle cx="407.7" cy="853.43" r="3" fill="#1c1c1c"/><rect x="410.9" y="843.85" width="1" height="1.2" fill="#333"/><rect x="419.6" y="843.85" width="1" height="1.2" fill="#333"/><rect x="425.3" y="850.83" width="1.8" height="5" fill="#1c1c1c"/><rect x="395" y="530.7" width="8" height="330.30" fill="#303030" opacity="0"/><path d="M421.2 511.3H429.2V526.8L425.2 530.6L421.2 526.8Z" fill="#2e6ebc"/><rect x="424.1" y="528" width="2.2" height="334.00" fill="#4f94e0"/></svg>
<div class="t" style="left:439.3px;top:518px;font-size:10px;color:#b4b4b4;font-weight:normal;">5</div>
<div class="t" style="left:482.7px;top:518px;font-size:10px;color:#b4b4b4;font-weight:normal;">10</div>
<div class="t" style="left:526.1px;top:518px;font-size:10px;color:#b4b4b4;font-weight:normal;">15</div>
<div class="t" style="left:569.5px;top:518px;font-size:10px;color:#b4b4b4;font-weight:normal;">20</div>
<div class="t" style="left:612.9px;top:518px;font-size:10px;color:#b4b4b4;font-weight:normal;">25</div>
<div class="t" style="left:656.3px;top:518px;font-size:10px;color:#b4b4b4;font-weight:normal;">30</div>
<div class="t" style="left:699.7px;top:518px;font-size:10px;color:#b4b4b4;font-weight:normal;">35</div>
<div class="t" style="left:743.1px;top:518px;font-size:10px;color:#b4b4b4;font-weight:normal;">40</div>
<div class="t" style="left:786.5px;top:518px;font-size:10px;color:#b4b4b4;font-weight:normal;">45</div>
<div class="t" style="left:829.9px;top:518px;font-size:10px;color:#b4b4b4;font-weight:normal;">50</div>
<div class="t" style="left:873.3px;top:518px;font-size:10px;color:#b4b4b4;font-weight:normal;">55</div>
<div class="t" style="left:916.7px;top:518px;font-size:10px;color:#b4b4b4;font-weight:normal;">60</div>
<div class="t" style="left:603.6px;top:493.5px;font-size:10px;color:#9a9a9a;font-weight:normal;font-style:italic;font-family:'Liberation Serif',serif;font-size:11px">1s</div>
<div class="t" style="left:812.8px;top:494.6px;font-size:9.5px;color:#c4c4c4;font-weight:normal;font-style:italic">2s</div>
<div class="a" style="left:47px;top:861.2px;width:888px;height:4px;background:#333333;"></div>
<div class="a" style="left:47px;top:865.4px;width:888px;height:14.6px;background:#2e2e2e;"></div>
<div class="a" style="left:47px;top:864.6px;width:888px;height:1px;background:#262626;"></div>
<div class="a" style="left:403.2px;top:861.2px;width:1px;height:19px;background:#262626;"></div>
<div class="a" style="left:424.1px;top:861px;width:2.2px;height:4px;background:#4f94e0;"></div>
<div class="t" style="left:256px;top:866.6px;font-size:11.5px;color:#adadad;font-weight:bold;letter-spacing:0.6px;-webkit-text-stroke:0.3px #adadad">影格 1</div>
<div class="a" style="left:405px;top:872.4px;width:141.6px;height:3.2px;background:#5e5e5e;border-radius:2px"></div>
<svg style="left:66.5px;top:460.5px" width="15" height="17" viewBox="0 0 15 17"><path d="M7.5 0.5L14.5 4.2L7.5 7.9L0.5 4.2Z" fill="#c6c6c6"/><path d="M1.2 7.6L7.5 11L13.8 7.6M1.2 11.3L7.5 14.7L13.8 11.3" fill="none" stroke="#c6c6c6" stroke-width="1.7"/></svg>
<svg style="left:307px;top:463px" width="16" height="11" viewBox="0 0 16 11"><rect x="0" y="0.5" width="10.5" height="10" rx="1" fill="#555"/><path d="M10.5 5.5L15.5 1.5V9.5Z" fill="#555"/></svg>
<div class="a" style="left:333.6px;top:456.8px;width:23.2px;height:22.2px;background:#3d3d3d;border:1px solid #4a4a4a;border-radius:3px"></div>
<svg style="left:338.2px;top:461.3px" width="14" height="14" viewBox="0 0 14 14"><g fill="#cdcdcd"><rect x="4.4" y="0.6" width="5.2" height="4.4"/><rect x="0.4" y="9" width="5" height="4.2"/><rect x="8.6" y="9" width="5" height="4.2"/></g><path d="M7 5V7.2M2.9 9V7.2H11.1V9" fill="none" stroke="#cdcdcd" stroke-width="1.2"/></svg>
<svg style="left:368.5px;top:461.5px" width="15" height="15" viewBox="0 0 15 15"><path d="M1 0.5V13.4H14" fill="none" stroke="#c6c6c6" stroke-width="1.2"/><path d="M3.4 11.6L10.4 6" fill="none" stroke="#c6c6c6" stroke-width="1.2"/><path d="M8.4 4.4L13 4L12 8.6Z" fill="#c6c6c6"/></svg>
<div class="t" style="left:429.5px;top:462.5px;font-size:14px;color:#868686;font-weight:normal;-webkit-text-stroke:0.35px #868686;letter-spacing:0.25px">24.00</div>
<div class="t" style="left:468.3px;top:460px;font-size:10px;color:#787878;font-weight:normal;letter-spacing:0.2px">FPS</div>
<div class="t" style="left:506px;top:462.5px;font-size:14px;color:#ffffff;font-weight:bold;">3</div>
<div class="t" style="left:523.8px;top:460px;font-size:10.5px;color:#cfcfcf;font-weight:normal;">F</div>
<svg style="left:671.6px;top:463.4px" width="8.6" height="12" viewBox="0 0 10 14"><path d="M8.2 1L1.8 6.7L8.2 12.4" fill="none" stroke="#c6c6c6" stroke-width="1.9"/></svg>
<svg style="left:701px;top:461px" width="18" height="16" viewBox="0 0 18 16"><rect x="1.2" y="2" width="12" height="12" rx="0.8" fill="#c6c6c6"/><circle cx="7.2" cy="8.4" r="2.2" fill="#2e2e2e"/><path d="M16.6 12V15H13.6Z" fill="#c6c6c6"/></svg>
<svg style="left:737px;top:463.4px" width="8.6" height="12" viewBox="0 0 10 14"><path d="M1.8 1L8.2 6.7L1.8 12.4" fill="none" stroke="#c6c6c6" stroke-width="1.9"/></svg>
<div class="a" style="left:759px;top:453px;width:1px;height:31px;background:#454545;"></div>
<svg style="left:769.5px;top:463px" width="18" height="15" viewBox="0 0 18 15"><circle cx="5" cy="5.7" r="4.7" fill="#8a8a8a"/><circle cx="11.4" cy="5.5" r="5.1" fill="#c6c6c6" stroke="#323232" stroke-width="0.7"/><path d="M16.8 12V14.8H14Z" fill="#c6c6c6"/></svg>
<svg style="left:803.6px;top:462px" width="19" height="16" viewBox="0 0 19 16"><rect x="0.5" y="1" width="3.4" height="12" fill="#8e8e8e"/><rect x="5.2" y="1" width="4.2" height="12.4" fill="#c6c6c6"/><rect x="10.6" y="1" width="3.4" height="12" fill="#8e8e8e"/><circle cx="7.3" cy="11" r="1.1" fill="#2e2e2e"/><path d="M17.8 12V15H14.8Z" fill="#c6c6c6"/></svg>
<svg style="left:836.5px;top:462.4px" width="17" height="15" viewBox="0 0 18 16"><rect x="0.5" y="4.5" width="9.5" height="9" fill="#585858"/><rect x="5.5" y="0.5" width="9" height="8.5" fill="#4a4a4a" stroke="#606060" stroke-width="0.8"/><path d="M8.5 4.5H12M10.5 2.8L12.2 4.5L10.5 6.2" stroke="#777" stroke-width="1" fill="none"/><path d="M16.6 12.5V15H14.1Z" fill="#585858"/></svg>
<svg style="left:869.4px;top:463.6px" width="14" height="11" viewBox="0 0 14 11"><rect x="0" y="0" width="13.4" height="10.2" rx="1" fill="#c6c6c6"/><path d="M3 4.1H10.8V6H7.9V10.2H5.8V6H3Z" fill="#2c2c2c"/></svg>
<div class="a" style="left:894px;top:453px;width:1px;height:31px;background:#454545;"></div>
<svg style="left:904px;top:461px" width="18" height="14" viewBox="0 0 18 14"><path d="M8.6 4.3H2.1V12.1H15.9V7.2" fill="none" stroke="#c6c6c6" stroke-width="1.9"/><path d="M8.4 0.9L14.6 4.2L8.4 7.3Z" fill="#c6c6c6"/></svg>
<svg style="left:67px;top:504.5px" width="14" height="13" viewBox="0 0 14 13"><rect x="0.6" y="0.6" width="12.6" height="11.8" fill="none" stroke="#c6c6c6" stroke-width="1.1"/><path d="M6.9 3.2V9.8M3.6 6.5H10.2" stroke="#c6c6c6" stroke-width="1.1"/></svg>
<svg style="left:97px;top:505px" width="16" height="12" viewBox="0 0 16 12"><path d="M0.3 0.8Q0.3 0.3 0.8 0.3H5.5L7 1.8H15.2Q15.7 1.8 15.7 2.3V11.2Q15.7 11.7 15.2 11.7H0.8Q0.3 11.7 0.3 11.2Z" fill="#c6c6c6"/><path d="M0.3 3H15.7" stroke="#323232" stroke-width="0.7"/></svg>
<svg style="left:127.8px;top:503.3px" width="15" height="15" viewBox="0 0 15 15"><path d="M0.5 3H14.5M5 2.6V0.8H10V2.6" fill="none" stroke="#c6c6c6" stroke-width="1.4"/><path d="M1.8 3.6H13.2L12.2 14.6H2.8Z" fill="#c6c6c6"/><path d="M5.3 5.5L5.6 12.8M7.5 5.5V12.8M9.7 5.5L9.4 12.8" stroke="#323232" stroke-width="0.9"/></svg>
<svg style="left:185px;top:509px" width="6" height="6" viewBox="0 0 6 6"><circle cx="3" cy="2.6" r="2.3" fill="#c6c6c6"/></svg>
<svg style="left:205px;top:503.5px" width="9" height="15" viewBox="0 0 9 15"><rect x="1" y="1" width="6.6" height="13" fill="none" stroke="#c6c6c6" stroke-width="1.7"/></svg>
<svg style="left:346px;top:504px" width="16" height="15" viewBox="0 0 16 15"><path d="M0.5 6.5Q7 -1.5 13.5 6.5Q7 14.5 0.5 6.5Z" fill="none" stroke="#9a9a9a" stroke-width="1.2"/><circle cx="7" cy="6.5" r="2.2" fill="#9a9a9a"/><path d="M9 9L15 14.5" stroke="#9a9a9a" stroke-width="1.5"/></svg>
<svg style="left:373px;top:505px" width="12" height="14" viewBox="0 0 12 14"><path d="M3 6V3.5A3 3 0 0 1 9 3.5V6" fill="none" stroke="#c6c6c6" stroke-width="1.5"/><rect x="0.5" y="5.8" width="11" height="7.7" fill="#c6c6c6"/><rect x="5.2" y="8" width="1.6" height="3" fill="#323232"/></svg>
<div class="a" style="left:333.4px;top:479.4px;width:243.6px;height:31.4px;background:#252525;border:1.2px solid #464646;border-radius:2px;box-shadow:0 1px 3px rgba(0,0,0,.5)"></div>
<div class="t" style="left:367.5px;top:488.5px;font-size:14px;color:#ffffff;font-weight:bold;letter-spacing:0.25px">傳播縮放、傾斜和翻轉</div>
<svg style="left:560px;top:492px" width="10" height="8" viewBox="0 0 10 8"><path d="M0.6 4.2L3.4 7L9.2 0.8" fill="none" stroke="#d8d8d8" stroke-width="1.3"/></svg>
<svg style="left:560.5px;top:500.5px" width="12" height="18" viewBox="0 0 12 18"><path d="M1 1V14L4 11.2L6.3 16.6L8.6 15.6L6.3 10.4H10.6Z" fill="#111" stroke="#fff" stroke-width="1.1" stroke-linejoin="round"/></svg>
<svg style="left:3px;top:5px" width="8" height="6" viewBox="0 0 8 6"><path d="M3 0.5L0.8 3L3 5.5M6.6 0.5L4.4 3L6.6 5.5" fill="none" stroke="#d8d8d8" stroke-width="1.5"/></svg>
<svg style="left:4.6px;top:17.6px" width="4" height="8" viewBox="0 0 4 8"><path d="M0.3 0.8H2.8V7.4" fill="none" stroke="#d0d0d0" stroke-width="1"/></svg>
<svg style="left:29.5px;top:17.5px" width="11" height="9" viewBox="0 0 11 9"><path d="M0 0.8H10.5M0 3.2H10.5M0 5.6H10.5M0 8H10.5" stroke="#a8a8a8" stroke-width="1"/></svg>
<svg style="left:15.4px;top:47px" width="13" height="17.6" viewBox="0 0 14 19"><path d="M1.4 1.8V17.6L5.6 12.6L12.4 11.5Z" fill="none" stroke="#c2c2c2" stroke-width="1.3" stroke-linejoin="miter"/></svg>
<svg style="left:30.3px;top:64.3px" width="4" height="4" viewBox="0 0 4 4"><path d="M3.8 0.4V3.8H0.4Z" fill="#bdbdbd"/></svg>
<div class="a" style="left:6px;top:72.5px;width:30.5px;height:30.5px;background:#474747;border-radius:4px"></div>
<svg style="left:11px;top:78px" width="21" height="18" viewBox="0 0 21 18"><rect x="7.2" y="3.2" width="12.4" height="12.6" fill="none" stroke="#fff" stroke-width="1.1" stroke-dasharray="1.3 1.1"/><g fill="#fff"><rect x="18.6" y="2.2" width="2.2" height="2.2"/><rect x="18.6" y="14.6" width="2.2" height="2.2"/><rect x="6.2" y="14.6" width="2.2" height="2.2"/><rect x="12.4" y="2.2" width="2" height="2.2"/><rect x="12.4" y="14.6" width="2" height="2.2"/><rect x="18.6" y="8.4" width="2.2" height="2"/></g><path d="M1 1.2V14.8L5 11.8L10.6 11Z" fill="#fff" stroke="#474747" stroke-width="0.6"/></svg>
<svg style="left:30.3px;top:98.3px" width="4" height="4" viewBox="0 0 4 4"><path d="M3.8 0.4V3.8H0.4Z" fill="#bdbdbd"/></svg>
<svg style="left:12px;top:111px" width="19" height="20" viewBox="0 0 19 20"><ellipse cx="9.6" cy="7.4" rx="8" ry="5.6" fill="none" stroke="#c2c2c2" stroke-width="1.2" transform="rotate(-14 9.6 7.4)"/><circle cx="5" cy="11.4" r="1.9" fill="none" stroke="#c2c2c2" stroke-width="1.1"/><path d="M6.4 12.6Q8 15 5.6 17.8" fill="none" stroke="#c2c2c2" stroke-width="1.1"/></svg>
<svg style="left:30.3px;top:130.3px" width="4" height="4" viewBox="0 0 4 4"><path d="M3.8 0.4V3.8H0.4Z" fill="#bdbdbd"/></svg>
<div class="a" style="left:6px;top:140px;width:30.5px;height:1.3px;background:#242424;"></div>
<svg style="left:13px;top:153px" width="18" height="17" viewBox="0 0 18 17"><path d="M14.8 0.4Q17 0.6 16.4 3L10.6 11L7 8.6Z" fill="#c2c2c2"/><path d="M6.4 9.4L9.8 11.8Q10 15.6 5 16.2Q2 16.6 0.2 16Q2.6 14.6 2.8 12.6Q3.4 9.2 6.4 9.4Z" fill="#c2c2c2"/><circle cx="13.2" cy="11.8" r="3.8" fill="#8a8a8a"/></svg>
<svg style="left:13px;top:185.5px" width="18" height="17" viewBox="0 0 18 17"><path d="M14.8 0.4Q17 0.6 16.4 3L10.6 11L7 8.6Z" fill="#c2c2c2"/><path d="M6.4 9.4L9.8 11.8Q10 15.6 5 16.2Q2 16.6 0.2 16Q2.6 14.6 2.8 12.6Q3.4 9.2 6.4 9.4Z" fill="#c2c2c2"/></svg>
<svg style="left:12.6px;top:217.3px" width="17.2" height="17.2" viewBox="0 0 18 18"><g transform="rotate(-45 9 9)"><rect x="1.2" y="4.2" width="15.6" height="9.6" rx="0.8" fill="#c2c2c2"/><rect x="2.4" y="5.4" width="4" height="7.2" fill="#323232"/></g></svg>
<svg style="left:13px;top:252.5px" width="17" height="14" viewBox="0 0 17 14"><rect x="0.6" y="0.6" width="15.4" height="12.6" fill="#777" stroke="#c2c2c2" stroke-width="1.2"/></svg>
<svg style="left:30.3px;top:268.8px" width="4" height="4" viewBox="0 0 4 4"><path d="M3.8 0.4V3.8H0.4Z" fill="#bdbdbd"/></svg>
<svg style="left:13px;top:284px" width="17" height="16" viewBox="0 0 17 16"><path d="M1.4 14.8L15 1.6" stroke="#c2c2c2" stroke-width="1.4"/></svg>
<div class="a" style="left:6px;top:311.8px;width:30.5px;height:1.3px;background:#242424;"></div>
<svg style="left:13px;top:324.5px" width="17" height="17" viewBox="0 0 17 17"><g fill="#c2c2c2"><path d="M11.2 0.6L16.4 5.8L14 8.2L8.8 3Z"/><path d="M8 4L13 9L10.6 13.4L0.6 16.4L3.6 6.4Z"/></g><path d="M1.2 15.8L6.6 10.4" stroke="#323232" stroke-width="1"/><circle cx="7.2" cy="9.8" r="1.3" fill="#323232"/></svg>
<svg style="left:30.3px;top:341.8px" width="4" height="4" viewBox="0 0 4 4"><path d="M3.8 0.4V3.8H0.4Z" fill="#bdbdbd"/></svg>
<div class="t" style="left:14.4px;top:356.2px;font-size:19.5px;color:#c2c2c2;font-weight:bold;font-family:'Liberation Serif',serif">T</div>
<svg style="left:13px;top:390px" width="18" height="17" viewBox="0 0 18 17"><path d="M7.6 2.5L13.4 8L5.9 15.8L0.2 10.3Z" fill="#c2c2c2"/><path d="M3.1 0.5L8.4 6.4" stroke="#323232" stroke-width="2.6"/><path d="M3.1 0.5L8.4 6.4" stroke="#c2c2c2" stroke-width="1.2"/><path d="M11.6 6.2Q16.4 6.8 15.9 10.4L15.7 12.4Q14.7 13.5 13.6 12.5L13.7 9.4Z" fill="#c2c2c2"/></svg>
<svg style="left:30.3px;top:407.2px" width="4" height="4" viewBox="0 0 4 4"><path d="M3.8 0.4V3.8H0.4Z" fill="#bdbdbd"/></svg>
<svg style="left:12px;top:421.8px" width="18" height="18" viewBox="0 0 18 18"><path d="M9.8 5.8L1.7 13.9Q0.5 15.5 1.7 16.6Q2.9 17.6 4.3 16.4L12.4 8.3" fill="none" stroke="#c2c2c2" stroke-width="1.2"/><path d="M9 5.6L12.8 9.4L13.8 8.4L12.8 7.2L16 4Q17 2.4 15.8 1.4Q14.6 0.4 13.2 1.6L10.2 4.6L9.8 4.6Z" fill="#c2c2c2"/></svg>
<svg style="left:12.3px;top:454.8px" width="16" height="16" viewBox="0 0 16 16"><path d="M8.6 0.4L15.2 7L13.4 7.6L10.6 10.2L10 13.2L2.6 5.8L5.6 5.2L8.2 2.4Z" fill="#c2c2c2"/><path d="M5.6 9.6L0.6 14.8" stroke="#c2c2c2" stroke-width="1.5"/></svg>
<div class="a" style="left:6px;top:483.4px;width:30.5px;height:1.3px;background:#242424;"></div>
<svg style="left:13px;top:495.5px" width="17" height="17" viewBox="0 0 17 17"><g fill="none" stroke="#c2c2c2" stroke-width="2" stroke-linecap="round"><path d="M5.6 9L4.6 3.2"/><path d="M8 8.4L7.8 1.4"/><path d="M10.4 8.6L11.2 2.2"/><path d="M12.8 9.6L15 4.6"/><path d="M4.6 12L1.2 8.6"/></g><path d="M4.2 8.4H13.8Q13.6 13.6 11.8 15.8Q8.4 17.4 6 15.6Q4.6 13.6 3.6 10.6Z" fill="#c2c2c2"/></svg>
<svg style="left:30.3px;top:513.8px" width="4" height="4" viewBox="0 0 4 4"><path d="M3.8 0.4V3.8H0.4Z" fill="#bdbdbd"/></svg>
<svg style="left:12.5px;top:528.2px" width="18" height="17" viewBox="0 0 18 17"><circle cx="6.4" cy="6.4" r="5.4" fill="none" stroke="#c2c2c2" stroke-width="1.3"/><path d="M10.4 10.2L15.6 14.8" stroke="#c2c2c2" stroke-width="2" stroke-linecap="round"/></svg>
<div class="a" style="left:13.4px;top:574px;width:3.8px;height:3.8px;background:#c6c6c6;border-radius:50%"></div>
<div class="a" style="left:19.200000000000003px;top:574px;width:3.8px;height:3.8px;background:#c6c6c6;border-radius:50%"></div>
<div class="a" style="left:25.0px;top:574px;width:3.8px;height:3.8px;background:#c6c6c6;border-radius:50%"></div>
<svg style="left:5.6px;top:593px" width="12" height="12" viewBox="0 0 13 13"><rect x="3.6" y="3.6" width="8.6" height="8.6" rx="1" fill="#111" stroke="#d0d0d0" stroke-width="1"/><rect x="0.6" y="0.6" width="7.8" height="7.8" rx="1" fill="#fff" stroke="#d0d0d0" stroke-width="1"/><rect x="2.2" y="2.2" width="4.6" height="4.6" fill="#fff" stroke="#222" stroke-width="0.8"/></svg>
<svg style="left:24.5px;top:594px" width="12" height="12" viewBox="0 0 12 12"><path d="M3.4 3.2H5.6Q8.6 3.2 8.6 6.4V8" fill="none" stroke="#c2c2c2" stroke-width="1.7"/><path d="M0.4 3.2L3.8 0.2V6.2Z" fill="#c2c2c2"/><path d="M8.6 11.6L5.6 7.8H11.6Z" fill="#c2c2c2"/></svg>
<div class="a" style="left:15.6px;top:621.5px;width:20.7px;height:20.2px;background:#ffffff;box-shadow:0 0 0 0.8px #1c1c1c"></div>
<div class="a" style="left:21.3px;top:627px;width:9.4px;height:9.4px;background:#444;border:1px solid #222"></div>
<div class="a" style="left:6.9px;top:611.4px;width:19.5px;height:19.4px;background:#33ccff;border:1px solid #f4ece6;box-shadow:0 0 0 0.8px #1c1c1c"></div>
<svg style="left:0;top:0" width="935" height="880" viewBox="0 0 935 880"><g><path d="M599.6 242.0L578.0 310.2L587.6 313.4L611.6 246.0Z" fill="#0a4fa6"/><circle cx="582.8" cy="311.8" r="5.00" fill="#0a4fa6"/><path d="M579.4 308.0L532.4 350.5L538.6 357.5L586.2 315.6Z" fill="#0a4fa6"/><path d="M526.6 352.2L535.3 345.4L544.7 356L537.2 364Z" fill="#2272c7"/><path d="M526 355L531 360L527 364Z" fill="#e8e8e8"/><path d="M509.4 363L513 361.4L527.8 389L529.6 393L523.6 394.4Z" fill="#b4b4b4"/><path d="M513 361.5L525 356.5L530 367.5L526.5 373L530.5 387.5L524.5 389Z" fill="#0c0c0c"/><circle cx="520.4" cy="362.8" r="2.3" fill="#d8d8d8"/><path d="M524 374.5L527.6 373.6M525.2 379.4L528.8 378.4" stroke="#eee" stroke-width="1.1"/><path d="M604.0 248.2L639.0 306.1L648.0 300.9L614.8 241.8Z" fill="#0e66cf"/><circle cx="643.5" cy="303.5" r="5.10" fill="#0e66cf"/><path d="M638.7 305.4L661.5 363.2L670.5 359.8L648.3 301.6Z" fill="#0e66cf"/><path d="M592 226L622.6 229.6L622 238L613 250H602.4L593 240Z" fill="#0e66cf"/><path d="M657.2 361.9L672.9 356.5L676 367L660.5 372.5Z" fill="#2b90f0"/><path d="M662 372.4L672.6 368.6L675 374L666 379Z" fill="#fff"/><path d="M668 388L673.4 393.8L700.4 376.4L701.6 371L696 368Z" fill="#fff"/><path d="M664.7 380L675.3 373L681.2 376.5L694.1 368.7L697.2 373L673 389.4L668.2 388.2Z" fill="#0c0c0c"/><circle cx="671.4" cy="382.8" r="2.3" fill="#fff"/><path d="M683.4 373.4L685.4 376.6M687.2 371.2L689.2 374.4M691 369L693 372" stroke="#fff" stroke-width="1.1"/><path d="M615.4 122H621.8L621.4 135H615.4Z" fill="#f7d380"/><path d="M627.6 149.6L668.4 186.4L722.6 176.8" fill="none" stroke="#34573f" stroke-width="8.6" stroke-linejoin="miter"/><path d="M720.8 170.8L727 169.6L729.2 181.4L723 182.8Z" fill="#3f9d70"/><path d="M727.6 172.6L731 169L731.6 172L737 171.6L733.6 174.2L737.6 175.6L733.4 177L735.6 180L731 178.6L728.6 180Z" fill="#fcd27e"/><path d="M612 132.4Q620 131.6 626.6 137.6Q628.4 180 626.8 233L588.2 227.2Q592 176 601 144Q604 134 612 132.4Z" fill="#4a7d5a"/><circle cx="611.8" cy="139.8" r="4.8" fill="#568863"/><path d="M609.4 135.6L614.2 144L553.6 178.6L529.2 224.4L519.8 219.6L546 170.8Z" fill="#568863"/><path d="M518.4 219.6L530 225.4L527.4 231L516 225.2Z" fill="#52c08d"/><path d="M517.5 226L524.5 229L523.6 232.6L522.6 238L520.8 234.4L519.4 239L518.4 234L515.6 237.6L516.2 232.4L512.6 233.4Z" fill="#fcd27e"/><circle cx="621.6" cy="107.6" r="17.2" fill="#fcd98a"/><ellipse cx="640.8" cy="103.3" rx="3.2" ry="2.9" fill="#fdd98c"/><path d="M593.6 97Q596 80 619.6 77.2Q634 76.6 644.8 87Q638 95 630 98Q620 101.6 614 101.4L610.8 106Q606.6 105.6 606 110Q606.4 113.6 608.8 114.6L604.6 117.6Q594.6 108 593.6 97Z" fill="#8a3a12"/><circle cx="609.6" cy="110.2" r="3.5" fill="#fcd98a"/><ellipse cx="634.3" cy="99.6" rx="1.1" ry="2" fill="#1a1a2a"/></g><rect x="591.8" y="224" width="29.6" height="24.2" fill="none" stroke="#111" stroke-width="0.8" stroke-dasharray="2 1.4"/><rect x="589.8" y="222.0" width="4" height="4" rx="0.5" fill="#0a0a0a"/><rect x="589.8" y="234.1" width="4" height="4" rx="0.5" fill="#0a0a0a"/><rect x="589.8" y="246.2" width="4" height="4" rx="0.5" fill="#0a0a0a"/><rect x="604.5" y="222.0" width="4" height="4" rx="0.5" fill="#0a0a0a"/><circle cx="606.5" cy="236.1" r="2" fill="#fff" stroke="#111" stroke-width="0.8"/><rect x="604.5" y="246.2" width="4" height="4" rx="0.5" fill="#0a0a0a"/><rect x="619.4" y="222.0" width="4" height="4" rx="0.5" fill="#0a0a0a"/><rect x="619.4" y="234.1" width="4" height="4" rx="0.5" fill="#0a0a0a"/><rect x="619.4" y="246.2" width="4" height="4" rx="0.5" fill="#0a0a0a"/><g stroke="#fff" stroke-width="2.6" fill="#fff" stroke-linejoin="round"><path d="M626.2 253.2L633.9 260.6"/><path d="M624.8 251.8L625.8 255.9L628.9 252.7ZM635.3 262.0L631.2 261.1L634.3 257.9Z"/></g><g stroke="#111" stroke-width="1.2" fill="#111"><path d="M626.2 253.2L633.9 260.6"/><path d="M624.8 251.8L625.8 255.9L628.9 252.7ZM635.3 262.0L631.2 261.1L634.3 257.9Z" stroke-width="0.4"/></g><g transform="translate(-218.7 62.2) scale(0.73)"><path d="M599.6 242.0L578.0 310.2L587.6 313.4L611.6 246.0Z" fill="#0a4fa6"/><circle cx="582.8" cy="311.8" r="5.00" fill="#0a4fa6"/><path d="M579.4 308.0L532.4 350.5L538.6 357.5L586.2 315.6Z" fill="#0a4fa6"/><path d="M526.6 352.2L535.3 345.4L544.7 356L537.2 364Z" fill="#2272c7"/><path d="M526 355L531 360L527 364Z" fill="#e8e8e8"/><path d="M509.4 363L513 361.4L527.8 389L529.6 393L523.6 394.4Z" fill="#b4b4b4"/><path d="M513 361.5L525 356.5L530 367.5L526.5 373L530.5 387.5L524.5 389Z" fill="#0c0c0c"/><circle cx="520.4" cy="362.8" r="2.3" fill="#d8d8d8"/><path d="M524 374.5L527.6 373.6M525.2 379.4L528.8 378.4" stroke="#eee" stroke-width="1.1"/><path d="M604.0 248.2L639.0 306.1L648.0 300.9L614.8 241.8Z" fill="#0e66cf"/><circle cx="643.5" cy="303.5" r="5.10" fill="#0e66cf"/><path d="M638.7 305.4L661.5 363.2L670.5 359.8L648.3 301.6Z" fill="#0e66cf"/><path d="M592 226L622.6 229.6L622 238L613 250H602.4L593 240Z" fill="#0e66cf"/><path d="M657.2 361.9L672.9 356.5L676 367L660.5 372.5Z" fill="#2b90f0"/><path d="M662 372.4L672.6 368.6L675 374L666 379Z" fill="#fff"/><path d="M668 388L673.4 393.8L700.4 376.4L701.6 371L696 368Z" fill="#fff"/><path d="M664.7 380L675.3 373L681.2 376.5L694.1 368.7L697.2 373L673 389.4L668.2 388.2Z" fill="#0c0c0c"/><circle cx="671.4" cy="382.8" r="2.3" fill="#fff"/><path d="M683.4 373.4L685.4 376.6M687.2 371.2L689.2 374.4M691 369L693 372" stroke="#fff" stroke-width="1.1"/><path d="M615.4 122H621.8L621.4 135H615.4Z" fill="#f7d380"/><path d="M627.6 149.6L668.4 186.4L722.6 176.8" fill="none" stroke="#34573f" stroke-width="8.6" stroke-linejoin="miter"/><path d="M720.8 170.8L727 169.6L729.2 181.4L723 182.8Z" fill="#3f9d70"/><path d="M727.6 172.6L731 169L731.6 172L737 171.6L733.6 174.2L737.6 175.6L733.4 177L735.6 180L731 178.6L728.6 180Z" fill="#fcd27e"/><path d="M612 132.4Q620 131.6 626.6 137.6Q628.4 180 626.8 233L588.2 227.2Q592 176 601 144Q604 134 612 132.4Z" fill="#4a7d5a"/><circle cx="611.8" cy="139.8" r="4.8" fill="#568863"/><path d="M609.4 135.6L614.2 144L553.6 178.6L529.2 224.4L519.8 219.6L546 170.8Z" fill="#568863"/><path d="M518.4 219.6L530 225.4L527.4 231L516 225.2Z" fill="#52c08d"/><path d="M517.5 226L524.5 229L523.6 232.6L522.6 238L520.8 234.4L519.4 239L518.4 234L515.6 237.6L516.2 232.4L512.6 233.4Z" fill="#fcd27e"/><circle cx="621.6" cy="107.6" r="17.2" fill="#fcd98a"/><ellipse cx="640.8" cy="103.3" rx="3.2" ry="2.9" fill="#fdd98c"/><path d="M593.6 97Q596 80 619.6 77.2Q634 76.6 644.8 87Q638 95 630 98Q620 101.6 614 101.4L610.8 106Q606.6 105.6 606 110Q606.4 113.6 608.8 114.6L604.6 117.6Q594.6 108 593.6 97Z" fill="#8a3a12"/><circle cx="609.6" cy="110.2" r="3.5" fill="#fcd98a"/><ellipse cx="634.3" cy="99.6" rx="1.1" ry="2" fill="#1a1a2a"/></g><rect x="213.7" y="225.3" width="21.9" height="17.4" fill="none" stroke="#111" stroke-width="0.8" stroke-dasharray="2 1.4"/><rect x="211.7" y="223.3" width="4" height="4" rx="0.5" fill="#0a0a0a"/><rect x="211.7" y="232.1" width="4" height="4" rx="0.5" fill="#0a0a0a"/><rect x="211.7" y="240.7" width="4" height="4" rx="0.5" fill="#0a0a0a"/><rect x="222.6" y="223.3" width="4" height="4" rx="0.5" fill="#0a0a0a"/><circle cx="224.6" cy="234.1" r="2" fill="#fff" stroke="#111" stroke-width="0.8"/><rect x="222.6" y="240.7" width="4" height="4" rx="0.5" fill="#0a0a0a"/><rect x="233.6" y="223.3" width="4" height="4" rx="0.5" fill="#0a0a0a"/><rect x="233.6" y="232.1" width="4" height="4" rx="0.5" fill="#0a0a0a"/><rect x="233.6" y="240.7" width="4" height="4" rx="0.5" fill="#0a0a0a"/><g stroke="#fff" stroke-width="2.6" fill="#fff" stroke-linejoin="round"><path d="M239.8 246.6L245.0 252.1"/><path d="M238.4 245.2L239.3 249.3L242.5 246.3ZM246.4 253.5L242.3 252.4L245.5 249.4Z"/></g><g stroke="#111" stroke-width="1.2" fill="#111"><path d="M239.8 246.6L245.0 252.1"/><path d="M238.4 245.2L239.3 249.3L242.5 246.3ZM246.4 253.5L242.3 252.4L245.5 249.4Z" stroke-width="0.4"/></g><path d="M362.6 216.2H429.4V202.6L459.4 224.7L429.4 246.8V233.2H362.6Z" fill="none" stroke="#cf1f2b" stroke-width="1.3" stroke-linejoin="miter"/></svg>
</body></html>
